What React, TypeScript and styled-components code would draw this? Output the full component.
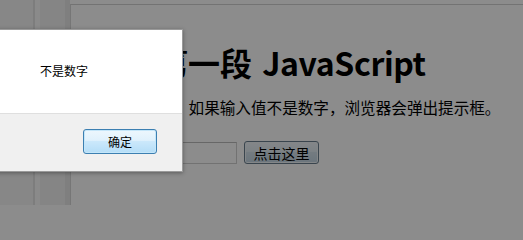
import styled, { createGlobalStyle } from "styled-components";

const GlobalStyle = createGlobalStyle`
  html, body {
    margin: 0;
    padding: 0;
    width: 523px;
    height: 205px;
    overflow: hidden;
    background: #8c8c8c;
    font-family: "Noto Sans CJK SC", "Noto Sans", sans-serif;
  }
`;

const Screen = styled.div`
  position: relative;
  width: 523px;
  height: 205px;
  display: flex;
  overflow: hidden;
  background: #ffffff;
`;

const Sidebar = styled.div`
  width: 70px;
  height: 100%;
  display: flex;
  flex-shrink: 0;
  background: #f7f7f7;
`;

const SidebarStrip = styled.div<{ $width: number; $shade: string }>`
  width: ${(p) => p.$width}px;
  height: 100%;
  background: ${(p) => p.$shade};
`;

const Page = styled.main`
  flex: 1;
  margin-top: 4px;
  border-top: 1px solid #d2d2d2;
  border-left: 1px solid #d8d8d8;
  padding-left: 17px;
  color: #000000;
`;

const Heading = styled.h1`
  margin: 37px 0 0 4px;
  font-size: 32px;
  line-height: 40px;
  font-weight: 700;
  white-space: nowrap;
  word-spacing: 3px;
`;

const Latin = styled.span`
  letter-spacing: -0.4px;
`;

const Paragraph = styled.p`
  margin: 14px 0 0 7px;
  font-size: 15.6px;
  line-height: 22px;
  white-space: nowrap;
`;

const FormRow = styled.div`
  display: flex;
  align-items: center;
  gap: 7px;
  margin-top: 23px;
`;

const TextInput = styled.input`
  box-sizing: border-box;
  width: 149px;
  height: 22px;
  border: 1px solid #d0d0d0;
  border-top-color: #bcbcbc;
  background: #ffffff;
  margin: 0;
`;

const PageButton = styled.button`
  box-sizing: border-box;
  width: 75px;
  height: 23px;
  padding: 0;
  border: 1px solid #6b7f8e;
  border-radius: 3px;
  background: linear-gradient(#f0f5f9 0%, #e2ecf3 45%, #d2e0ea 50%, #c3d5e2 100%);
  box-shadow: inset 0 0 0 1px #eef4f8;
  font-family: "Noto Sans CJK SC", sans-serif;
  font-size: 14px;
  color: #000000;
`;

const Dim = styled.div`
  position: absolute;
  inset: 0;
  background: rgba(0, 0, 0, 0.45);
`;

const Dialog = styled.div`
  position: absolute;
  left: -20px;
  top: 29px;
  width: 203px;
  height: 143px;
  display: flex;
  flex-direction: column;
  background: #ffffff;
  border: 1px solid #9a9a9a;
  box-sizing: border-box;
  box-shadow: 0 1px 4px rgba(0, 0, 0, 0.35);
`;

const DialogBody = styled.div`
  height: 83px;
  display: flex;
  align-items: center;
  padding: 0 0 3px 59px;
  box-sizing: border-box;
  font-size: 12px;
  color: #000000;
`;

const DialogFooter = styled.div`
  flex: 1;
  display: flex;
  align-items: center;
  justify-content: flex-end;
  padding: 0 25px 2px 0;
  background: #f0f0f0;
  border-top: 1px solid #dfdfdf;
`;

const OkButton = styled.button`
  box-sizing: border-box;
  width: 74px;
  height: 25px;
  padding: 0;
  border: 1px solid #3c7fb1;
  border-radius: 3px;
  background: linear-gradient(#edf7fd 0%, #e0f1fc 45%, #cbe8fb 50%, #b4ddf7 100%);
  box-shadow: inset 0 0 0 1px #c4e6f9;
  font-family: "Noto Sans CJK SC", sans-serif;
  font-size: 12px;
  color: #000000;
`;

export default function App() {
  return (
    <>
      <GlobalStyle />
      <Screen>
        <Sidebar>
          <SidebarStrip $width={33} $shade="#f6f6f6" />
          <SidebarStrip $width={2} $shade="#e4e4e4" />
          <SidebarStrip $width={5} $shade="#fbfbfb" />
          <SidebarStrip $width={25} $shade="#f3f3f3" />
          <SidebarStrip $width={5} $shade="#e8e8e8" />
        </Sidebar>
        <Page>
          <Heading>
            我的第一段 <Latin>JavaScript</Latin>
          </Heading>
          <Paragraph>请输入数字。如果输入值不是数字，浏览器会弹出提示框。</Paragraph>
          <FormRow>
            <TextInput type="text" />
            <PageButton type="button">点击这里</PageButton>
          </FormRow>
        </Page>
        <Dim />
        <Dialog>
          <DialogBody>不是数字</DialogBody>
          <DialogFooter>
            <OkButton type="button">确定</OkButton>
          </DialogFooter>
        </Dialog>
      </Screen>
    </>
  );
}
